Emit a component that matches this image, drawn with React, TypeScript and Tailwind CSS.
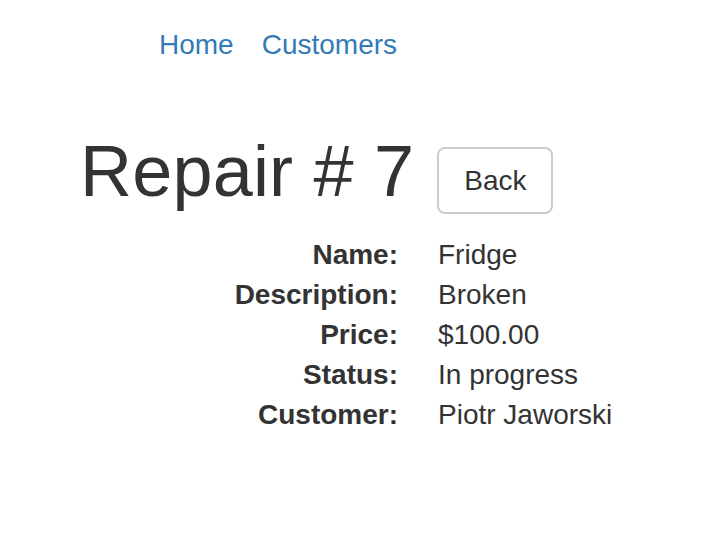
import React from 'react';

const rows: [string, string][] = [
  ['Name:', 'Fridge'],
  ['Description:', 'Broken'],
  ['Price:', '$100.00'],
  ['Status:', 'In progress'],
  ['Customer:', 'Piotr Jaworski'],
];

const App: React.FC = () => {
  return (
    <div className="min-h-[538px] bg-white text-[#333] font-['Liberation_Sans',Arial,sans-serif] text-[28px] leading-[40px]">
      <div className="px-[78px] pt-[25px]">
        <nav className="flex gap-[28px] pl-[81px]">
          <a href="#" className="text-[#337ab7]">Home</a>
          <a href="#" className="text-[#337ab7]">Customers</a>
        </nav>

        <div className="mt-[67px] flex items-start">
          <h1 className="ml-[2px] text-[72px] leading-[79px] font-normal tracking-[0.2px]">Repair # 7</h1>
          <button className="ml-[23px] mt-[15px] h-[67px] px-[25px] border-2 border-[#ccc] rounded-[8px] bg-white text-[#333] leading-[40px]">
            Back
          </button>
        </div>

        <dl className="mt-[21px]">
          {rows.map(([label, value]) => (
            <div key={label} className="flex">
              <dt className="w-[320px] text-right font-bold">{label}</dt>
              <dd className="ml-[40px]">{value}</dd>
            </div>
          ))}
        </dl>
      </div>
    </div>
  );
};

export default App;
